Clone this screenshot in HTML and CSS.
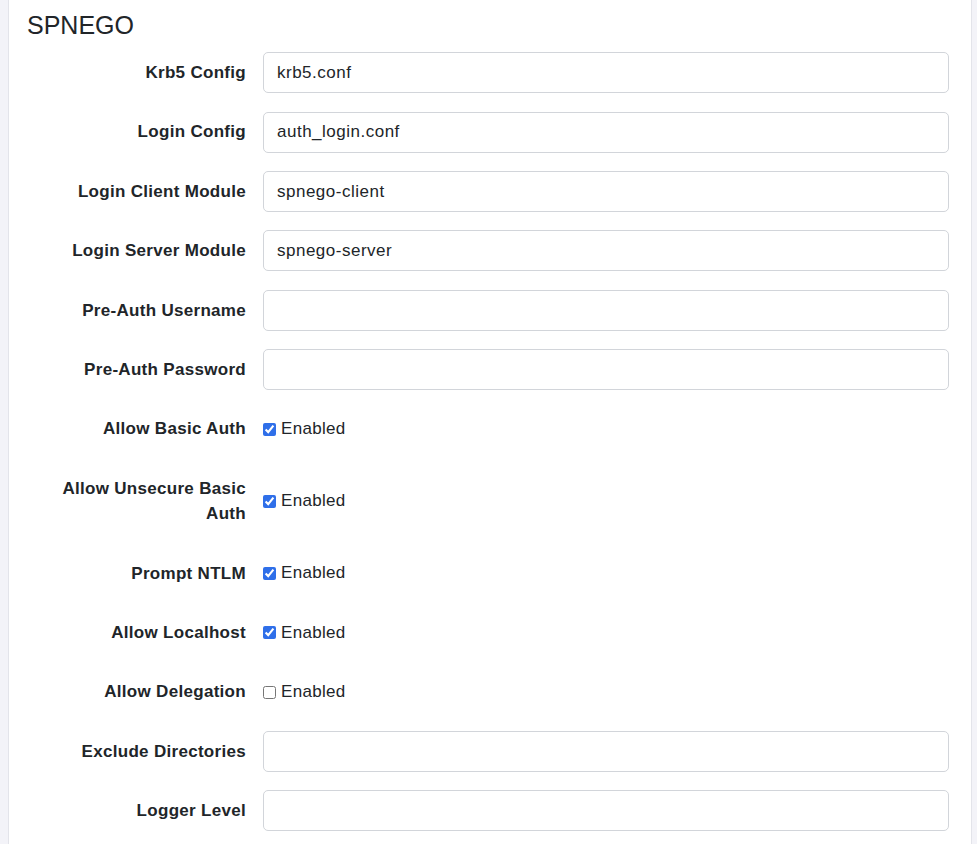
FILE: index.html
```html
<!DOCTYPE html>
<html>
<head>
    <title>SPNEGO</title>
    <link rel="stylesheet" href="styles.css">
</head>
<body>

<div class="panel">
    <h3 class="panel-title">SPNEGO</h3>

    <form class="settings">
        <div class="field">
            <label class="field-label" for="krb5">Krb5 Config</label>
            <input class="field-input" id="krb5" type="text" value="krb5.conf">
        </div>
        <div class="field">
            <label class="field-label" for="loginConf">Login Config</label>
            <input class="field-input" id="loginConf" type="text" value="auth_login.conf">
        </div>
        <div class="field">
            <label class="field-label" for="clientModule">Login Client Module</label>
            <input class="field-input" id="clientModule" type="text" value="spnego-client">
        </div>
        <div class="field">
            <label class="field-label" for="serverModule">Login Server Module</label>
            <input class="field-input" id="serverModule" type="text" value="spnego-server">
        </div>
        <div class="field">
            <label class="field-label" for="preAuthUser">Pre-Auth Username</label>
            <input class="field-input" id="preAuthUser" type="text">
        </div>
        <div class="field">
            <label class="field-label" for="preAuthPass">Pre-Auth Password</label>
            <input class="field-input" id="preAuthPass" type="password">
        </div>
        <div class="field">
            <span class="field-label">Allow Basic Auth</span>
            <label class="check"><input type="checkbox" checked> Enabled</label>
        </div>
        <div class="field">
            <span class="field-label">Allow Unsecure Basic Auth</span>
            <label class="check"><input type="checkbox" checked> Enabled</label>
        </div>
        <div class="field">
            <span class="field-label">Prompt NTLM</span>
            <label class="check"><input type="checkbox" checked> Enabled</label>
        </div>
        <div class="field">
            <span class="field-label">Allow Localhost</span>
            <label class="check"><input type="checkbox" checked> Enabled</label>
        </div>
        <div class="field">
            <span class="field-label">Allow Delegation</span>
            <label class="check"><input type="checkbox"> Enabled</label>
        </div>
        <div class="field">
            <label class="field-label" for="excludeDirs">Exclude Directories</label>
            <input class="field-input" id="excludeDirs" type="text">
        </div>
        <div class="field">
            <label class="field-label" for="loggerLevel">Logger Level</label>
            <input class="field-input" id="loggerLevel" type="text">
        </div>
    </form>
</div>

</body>
</html>
```

FILE: styles.css
```css
body {
    margin: 0;
    padding: 0 5px 0 8px;
    background-color: #f3f3f8;
    font-family: "Liberation Sans", Arial, sans-serif;
    font-size: 17px;
    color: #212529;
}

.panel {
    background-color: #fff;
    border: 1px solid #e3e4ea;
    border-top: none;
    padding: 7px 22px 40px 18px;
}

.panel-title {
    margin: 0 0 9px 0;
    font-size: 25px;
    font-weight: normal;
    line-height: 36px;
}

.field {
    display: grid;
    grid-template-columns: 219px 1fr;
    column-gap: 17px;
    align-items: center;
    margin-bottom: 17.9px;
}

.field-label {
    text-align: right;
    font-weight: bold;
    letter-spacing: 0.3px;
    line-height: 25.5px;
    padding: 8px 0;
}

.field-input {
    box-sizing: border-box;
    height: 41px;
    width: 100%;
    padding: 0 13px;
    border: 1px solid #d2d5da;
    border-radius: 5px;
    font-family: inherit;
    font-size: 17px;
    letter-spacing: 0.5px;
    color: #212529;
}

.check {
    display: flex;
    align-items: center;
    letter-spacing: 0.3px;
}

.check input {
    width: 13px;
    height: 13px;
    margin: 0 5px 0 0;
    accent-color: #2f6fe9;
}
```
